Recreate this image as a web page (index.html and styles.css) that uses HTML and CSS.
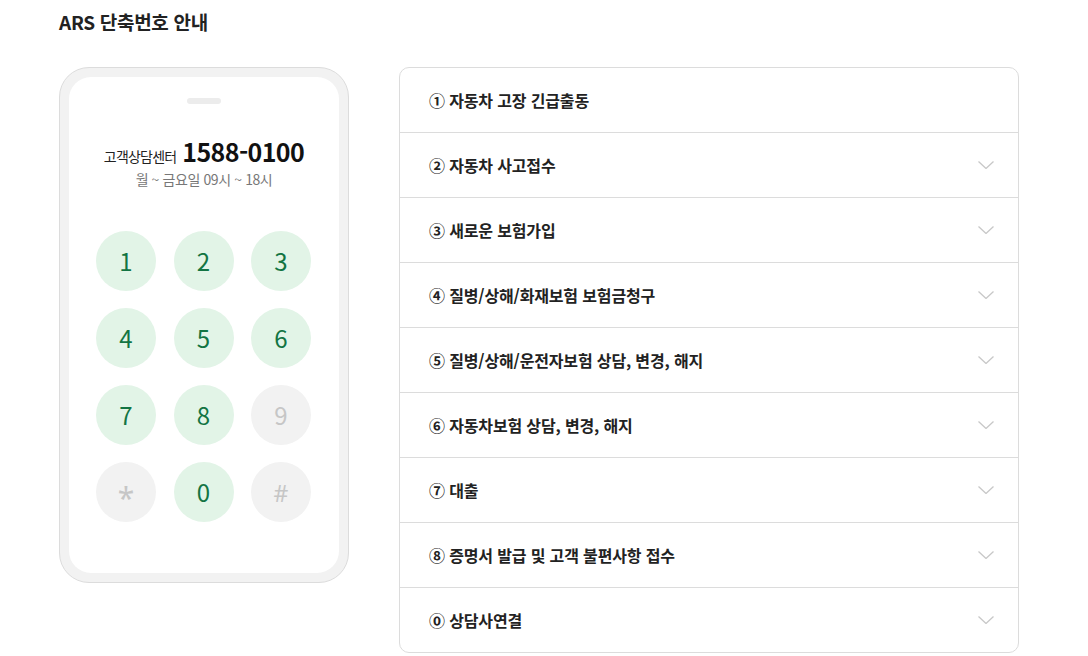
FILE: index.html
```html
<!DOCTYPE html>
<html lang="ko">
<head>
<meta charset="utf-8">
<link rel="stylesheet" href="styles.css">
</head>
<body>
<div class="page">
  <h2 class="title">ARS 단축번호 안내</h2>
  <div class="content">
    <div class="phone">
      <div class="screen">
        <div class="notch"></div>
        <div class="center">
          <span class="label">고객상담센터</span>
          <strong class="tel">1588-0100</strong>
        </div>
        <div class="hours">월 ~ 금요일 09시 ~ 18시</div>
        <div class="keypad">
          <span class="key on">1</span>
          <span class="key on">2</span>
          <span class="key on">3</span>
          <span class="key on">4</span>
          <span class="key on">5</span>
          <span class="key on">6</span>
          <span class="key on">7</span>
          <span class="key on">8</span>
          <span class="key off">9</span>
          <span class="key off star">*</span>
          <span class="key on">0</span>
          <span class="key off hash">#</span>
        </div>
      </div>
    </div>
    <ul class="accordion">
      <li class="item"><span>① 자동차 고장 긴급출동</span></li>
      <li class="item"><span>② 자동차 사고접수</span><svg class="chev" viewBox="0 0 16 8"><path d="M0.5 0.5 L8 7.5 L15.5 0.5"/></svg></li>
      <li class="item"><span>③ 새로운 보험가입</span><svg class="chev" viewBox="0 0 16 8"><path d="M0.5 0.5 L8 7.5 L15.5 0.5"/></svg></li>
      <li class="item"><span>④ 질병/상해/화재보험 보험금청구</span><svg class="chev" viewBox="0 0 16 8"><path d="M0.5 0.5 L8 7.5 L15.5 0.5"/></svg></li>
      <li class="item"><span>⑤ 질병/상해/운전자보험 상담, 변경, 해지</span><svg class="chev" viewBox="0 0 16 8"><path d="M0.5 0.5 L8 7.5 L15.5 0.5"/></svg></li>
      <li class="item"><span>⑥ 자동차보험 상담, 변경, 해지</span><svg class="chev" viewBox="0 0 16 8"><path d="M0.5 0.5 L8 7.5 L15.5 0.5"/></svg></li>
      <li class="item"><span>⑦ 대출</span><svg class="chev" viewBox="0 0 16 8"><path d="M0.5 0.5 L8 7.5 L15.5 0.5"/></svg></li>
      <li class="item"><span>⑧ 증명서 발급 및 고객 불편사항 접수</span><svg class="chev" viewBox="0 0 16 8"><path d="M0.5 0.5 L8 7.5 L15.5 0.5"/></svg></li>
      <li class="item"><span>⓪ 상담사연결</span><svg class="chev" viewBox="0 0 16 8"><path d="M0.5 0.5 L8 7.5 L15.5 0.5"/></svg></li>
    </ul>
  </div>
</div>
</body>
</html>
```
FILE: styles.css
```css
* { box-sizing: border-box; }
html, body { margin: 0; padding: 0; background: #fff; }
body {
  font-family: "Noto Sans CJK KR", "Noto Sans", sans-serif;
  color: #222;
}
.page { padding: 8px 0 0 59px; }
.title {
  margin: 0;
  font-size: 19px;
  font-weight: 700;
  line-height: 28px;
  letter-spacing: -0.3px;
  color: #222;
}
.content {
  display: flex;
  gap: 50px;
  margin-top: 31px;
  align-items: flex-start;
}
.phone {
  width: 290px;
  height: 516px;
  background: #f2f2f2;
  border: 1px solid #dcdcdc;
  border-radius: 30px;
  padding: 9px;
}
.screen {
  height: 100%;
  background: #fff;
  border-radius: 22px;
  display: flex;
  flex-direction: column;
  align-items: center;
  padding-top: 21px;
}
.notch {
  width: 34px;
  height: 6px;
  border-radius: 3px;
  background: #ececec;
}
.center {
  margin-top: 32px;
  display: flex;
  align-items: baseline;
  gap: 6px;
  line-height: 30px;
}
.label { font-size: 14px; letter-spacing: -0.8px; color: #222; }
.tel { font-size: 25px; font-weight: 700; letter-spacing: -0.6px; color: #111; }
.hours {
  font-size: 14px;
  color: #777;
  letter-spacing: -0.4px;
  line-height: 20px;
  margin-top: -2px;
}
.keypad {
  margin-top: 42px;
  margin-left: -1px;
  display: grid;
  grid-template-columns: repeat(3, 60px);
  column-gap: 17.5px;
  row-gap: 17px;
}
.key {
  width: 60px;
  height: 60px;
  border-radius: 50%;
  display: flex;
  align-items: center;
  justify-content: center;
  font-size: 24px;
  line-height: 1;
}
.key.on { background: #e2f4e7; color: #137443; }
.key.off { background: #f2f2f2; color: #c6c6c6; }
.key.star { font-family: "Noto Sans", sans-serif; font-size: 30px; padding-top: 12px; }
.key.hash { font-family: "Noto Sans", sans-serif; font-size: 23px; padding-top: 2px; }
.accordion {
  list-style: none;
  margin: 0;
  padding: 0;
  width: 620px;
  border: 1px solid #dcdcdc;
  border-radius: 10px;
}
.item {
  height: 65px;
  display: flex;
  align-items: center;
  justify-content: space-between;
  padding: 0 24px 0 29px;
  border-top: 1px solid #dcdcdc;
  font-size: 16px;
  font-weight: 700;
  letter-spacing: -0.15px;
  color: #222;
}
.item:first-child { border-top: 0; height: 64px; }
.chev {
  width: 16px;
  height: 8px;
  fill: none;
  stroke: #c8c8c8;
  stroke-width: 1.3;
}
```
